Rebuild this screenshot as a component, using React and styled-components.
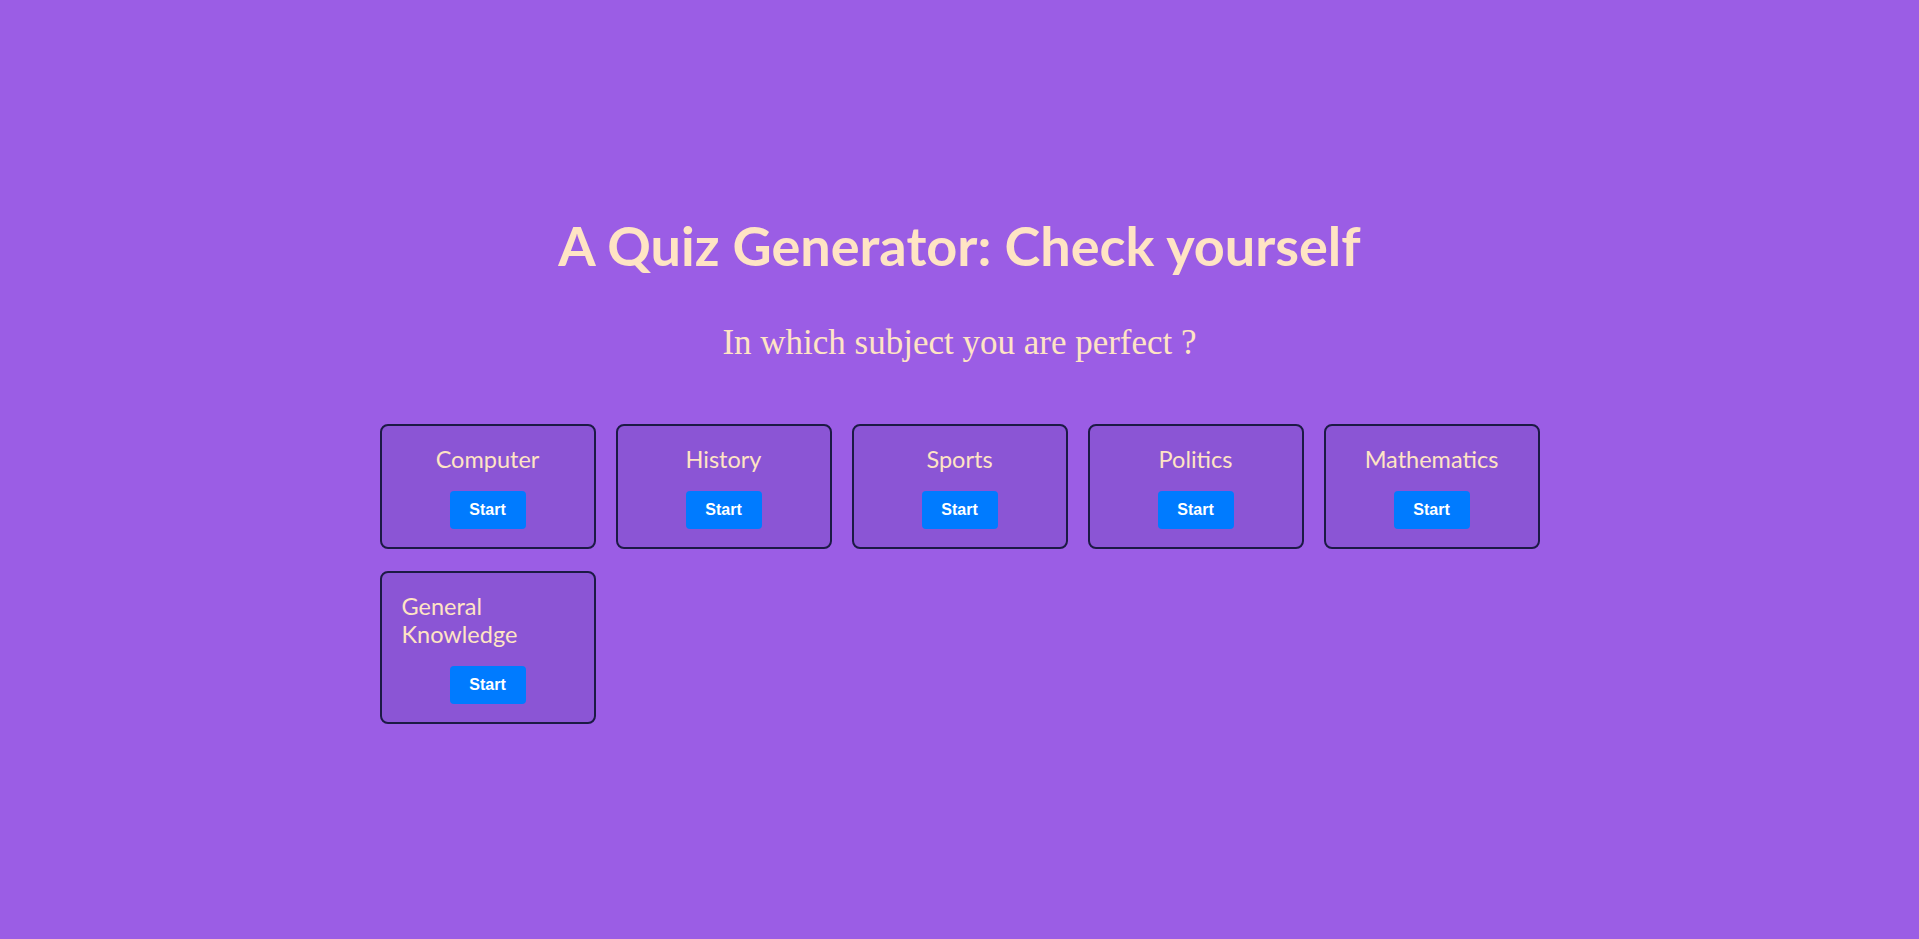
import React from "react";
import styled, { createGlobalStyle } from "styled-components";

const GlobalStyle = createGlobalStyle`
  * {
    box-sizing: border-box;
  }
  body {
    margin: 0;
    background-color: #9b5de5;
    font-family: "Lato", "Open Sans", sans-serif;
  }
`;

const subjects = [
  "Computer",
  "History",
  "Sports",
  "Politics",
  "Mathematics",
  "General Knowledge",
];

const PageStyles = styled.div`
  min-height: 100vh;
  display: flex;
  flex-direction: column;
  align-items: center;
  padding: 214px 0 40px;
`;

const Heading = styled.h1`
  margin: 0;
  font-family: "Lato", sans-serif;
  font-weight: 700;
  font-size: 54px;
  line-height: 64px;
  color: #ffe4c4;
  text-align: center;
`;

const SubHeading = styled.p`
  margin: 45px 0 0;
  font-family: "Liberation Serif", "Times New Roman", serif;
  font-size: 35px;
  line-height: 40px;
  color: #ffe4c4;
  text-align: center;
`;

const CardGrid = styled.div`
  margin-top: 61px;
  display: grid;
  grid-template-columns: repeat(5, 216px);
  gap: 22px 20px;
  align-items: start;
`;

const Card = styled.div`
  display: flex;
  flex-direction: column;
  align-items: center;
  padding: 19px 20px 18px;
  background-color: #8b55d5;
  border: 2px solid #1c1a45;
  border-radius: 8px;
`;

const CardTitle = styled.h3`
  margin: 0 0 18px;
  font-family: "Lato", sans-serif;
  font-weight: 400;
  font-size: 23.5px;
  line-height: 28px;
  color: #ffe4c4;
`;

const StartButton = styled.button`
  width: 76px;
  height: 38px;
  border: none;
  border-radius: 4px;
  background-color: #007bff;
  color: #ffffff;
  font-family: "Liberation Sans", Arial, sans-serif;
  font-weight: 700;
  font-size: 16px;
  cursor: pointer;
`;

function SubjectCard({ name }) {
  return (
    <Card>
      <CardTitle>{name}</CardTitle>
      <StartButton>Start</StartButton>
    </Card>
  );
}

function App() {
  return (
    <>
      <GlobalStyle />
      <PageStyles>
        <Heading>A Quiz Generator: Check yourself</Heading>
        <SubHeading>In which subject you are perfect ?</SubHeading>
        <CardGrid>
          {subjects.map((name) => (
            <SubjectCard key={name} name={name} />
          ))}
        </CardGrid>
      </PageStyles>
    </>
  );
}

export default App;
